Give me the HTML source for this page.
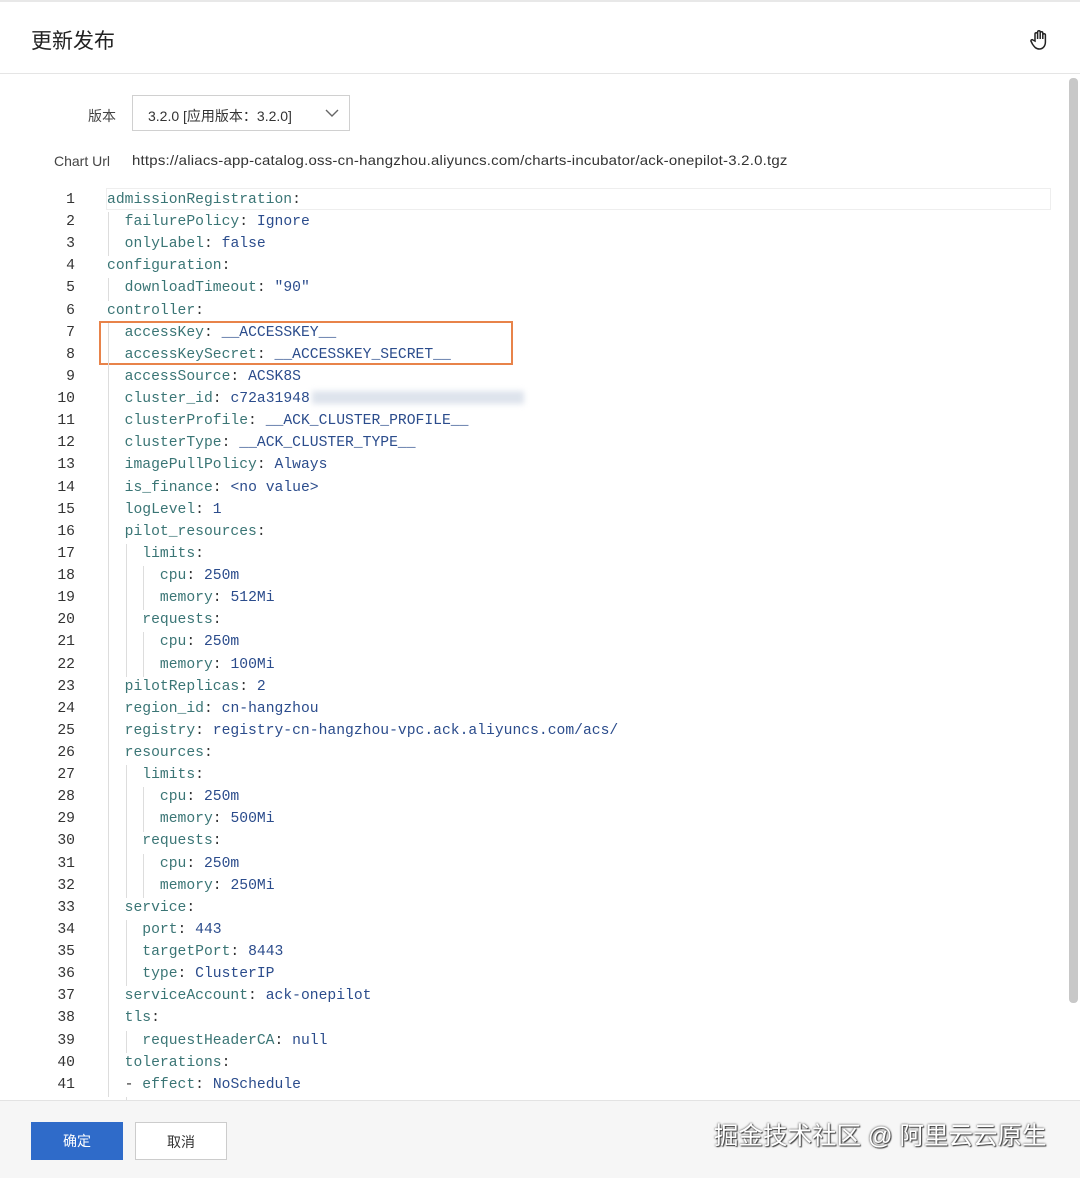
<!DOCTYPE html>
<html><head><meta charset="utf-8"><style>
body{margin:0;width:1080px;height:1177px;background:#fff;font-family:"Liberation Sans","Noto Sans CJK SC",sans-serif;position:relative;overflow:hidden}
.hdr{position:absolute;left:0;top:0;width:1080px;height:74px;border-bottom:1px solid #e5e5e5;border-top:2px solid #e8e8e8;box-sizing:border-box}
.hdr h1{margin:0;position:absolute;left:31px;top:23px;font-size:21px;font-weight:normal;color:#222}
.lbl{position:absolute;font-size:14px;color:#444}
.sel{position:absolute;left:132px;top:95px;width:218px;height:36px;border:1px solid #d0d0d0;box-sizing:border-box;font-size:14px;color:#333;padding:10px 0 0 15px}
.code{position:absolute;left:0;top:192px;font-family:"Liberation Mono",monospace;font-size:14.7px}
.ln{position:absolute;width:75px;text-align:right;color:#333}
.l{position:absolute;left:107px;white-space:pre;color:#3a7575}
.v{color:#2b4c8c}
.g{position:absolute;width:1px;background:#ddd}
.foot{position:absolute;left:0;top:1100px;width:1080px;height:77px;background:#f6f6f6;border-top:1px solid #e3e3e3}
.btn{position:absolute;top:1122px;height:38px;width:92px;font-size:14px;text-align:center;line-height:38px;box-sizing:border-box}
</style></head><body>
<div class="hdr"><h1>更新发布</h1>
<svg style="position:absolute;left:1030px;top:27px" width="20" height="22" viewBox="0 0 20 22" fill="none" stroke="#222" stroke-width="1.5"><path d="M5 12V5a1.3 1.3 0 0 1 2.6 0v5V3a1.3 1.3 0 0 1 2.6 0v7V4a1.3 1.3 0 0 1 2.6 0v6V6a1.3 1.3 0 0 1 2.6 0v7c0 4-2.5 7-6 7s-5-2-7-5l-1.5-3a1.2 1.2 0 0 1 2-1z"/></svg></div>
<div style="position:absolute;right:2px;top:78px;width:9px;height:925px;background:#c8c8c8;border-radius:4px"></div>
<div class="lbl" style="left:88px;top:106px">版本</div>
<div class="sel">3.2.0 [应用版本：3.2.0]<svg style="position:absolute;right:10px;top:13px" width="14" height="9" viewBox="0 0 14 9"><path d="M1 1l6 6 6-6" stroke="#666" fill="none" stroke-width="1.4"/></svg></div>
<div class="lbl" style="left:54px;top:153px">Chart Url</div>
<div class="lbl" style="left:132px;top:152px;color:#333;font-size:14px;letter-spacing:0.2px;transform-origin:0 0;transform:scaleX(1.07)">https://aliacs-app-catalog.oss-cn-hangzhou.aliyuncs.com/charts-incubator/ack-onepilot-3.2.0.tgz</div>
<div style="position:absolute;left:106px;top:188px;width:943px;height:20px;border:1px solid #eee"></div>
<div style="position:absolute;left:99px;top:321px;width:414px;height:44px;border:2px solid #e8834a;box-sizing:border-box"></div>
<div style="position:absolute;left:312px;top:391px;width:212px;height:13px;background:#dde3ec;filter:blur(3px)"></div>
<div class="code" id="c"></div>
<div class="foot"></div>
<div class="btn" style="left:31px;background:#2f6bc9;color:#fff">确定</div>
<div class="btn" style="left:135px;background:#fff;border:1px solid #ccc;color:#333">取消</div>
<div style="position:absolute;left:714px;top:1117px;font-size:24.5px;color:#fff;text-shadow:0 0 2px #333,1px 1px 1px #444">掘金技术社区 @ 阿里云云原生</div>
<script>
var L=[[0,"admissionRegistration",""],[1,"failurePolicy","Ignore"],[1,"onlyLabel","false"],[0,"configuration",""],[1,"downloadTimeout",'"90"'],[0,"controller",""],[1,"accessKey","__ACCESSKEY__"],[1,"accessKeySecret","__ACCESSKEY_SECRET__"],[1,"accessSource","ACSK8S"],[1,"cluster_id","c72a31948"],[1,"clusterProfile","__ACK_CLUSTER_PROFILE__"],[1,"clusterType","__ACK_CLUSTER_TYPE__"],[1,"imagePullPolicy","Always"],[1,"is_finance","<no value>"],[1,"logLevel","1"],[1,"pilot_resources",""],[2,"limits",""],[3,"cpu","250m"],[3,"memory","512Mi"],[2,"requests",""],[3,"cpu","250m"],[3,"memory","100Mi"],[1,"pilotReplicas","2"],[1,"region_id","cn-hangzhou"],[1,"registry","registry-cn-hangzhou-vpc.ack.aliyuncs.com/acs/"],[1,"resources",""],[2,"limits",""],[3,"cpu","250m"],[3,"memory","500Mi"],[2,"requests",""],[3,"cpu","250m"],[3,"memory","250Mi"],[1,"service",""],[2,"port","443"],[2,"targetPort","8443"],[2,"type","ClusterIP"],[1,"serviceAccount","ack-onepilot"],[1,"tls",""],[2,"requestHeaderCA","null"],[1,"tolerations",""],[1,"effect","NoSchedule","- "]];
var h="";
L.forEach(function(a,i){var t=i*22.12;
h+='<div class="ln" style="top:'+t+'px">'+(i+1)+'</div>';
var ind="  ".repeat(a[0]);
var val=a[2].replace(/&/g,"&amp;").replace(/</g,"&lt;");
h+='<div class="l" style="top:'+t+'px">'+ind+(a[3]?'<span style="color:#333">- </span>':'')+a[1]+'<span style="color:#333">:</span>'+(val?' <span class="v">'+val+'</span>':'')+'</div>';
for(var k=1;k<=a[0];k++){h+='<div class="g" style="left:'+(108+(k-1)*17.6)+'px;top:'+(t-2)+'px;height:22.2px"></div>';}
});
h+='<div class="g" style="left:125.6px;top:'+(41*22.12-2)+'px;height:14px"></div>';
document.getElementById("c").innerHTML=h;
</script>
</body></html>
